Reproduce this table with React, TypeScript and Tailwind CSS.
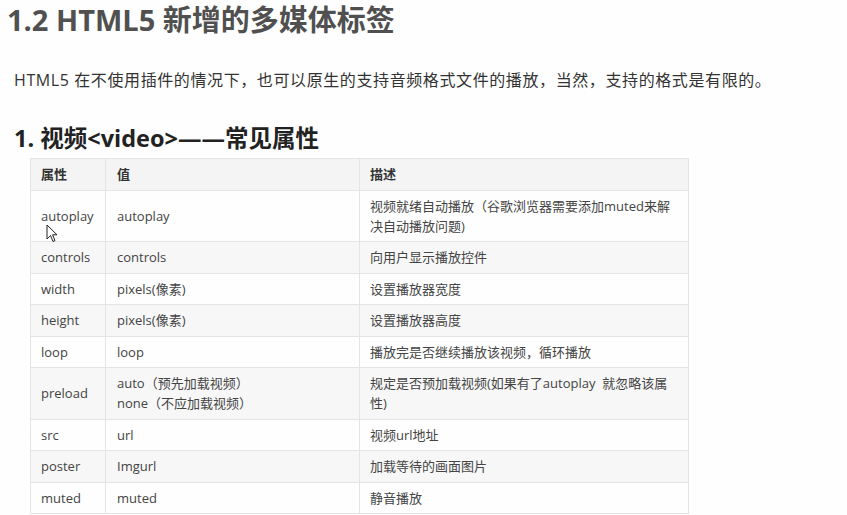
const font = { fontFamily: '"Open Sans", "Noto Sans CJK SC", sans-serif' };

const rows: { attr: string; value: string[]; desc: string[] }[] = [
  { attr: "autoplay", value: ["autoplay"], desc: ["视频就绪自动播放（谷歌浏览器需要添加muted来解", "决自动播放问题)"] },
  { attr: "controls", value: ["controls"], desc: ["向用户显示播放控件"] },
  { attr: "width", value: ["pixels(像素)"], desc: ["设置播放器宽度"] },
  { attr: "height", value: ["pixels(像素)"], desc: ["设置播放器高度"] },
  { attr: "loop", value: ["loop"], desc: ["播放完是否继续播放该视频，循环播放"] },
  { attr: "preload", value: ["auto（预先加载视频）", "none（不应加载视频）"], desc: ["规定是否预加载视频(如果有了autoplay  就忽略该属", "性)"] },
  { attr: "src", value: ["url"], desc: ["视频url地址"] },
  { attr: "poster", value: ["Imgurl"], desc: ["加载等待的画面图片"] },
  { attr: "muted", value: ["muted"], desc: ["静音播放"] },
];

function Cursor() {
  return (
    <svg className="absolute left-[46px] top-[224px]" width="12" height="19" viewBox="0 0 12 19">
      <path d="M1 1 L1 15 L4.5 11.5 L7 17.5 L9 16.6 L6.6 10.8 L11 10.8 Z" fill="#fff" stroke="#222" strokeWidth="1" strokeLinejoin="round" />
    </svg>
  );
}

export default function App() {
  return (
    <div className="relative w-[847px] h-[515px] overflow-hidden bg-[#fefefe]" style={font}>
      {/* 标题 */}
      <h1 className="pl-[7px] pt-[1px] text-[29px] leading-[38px] font-bold text-[#505050]">
        1.2 HTML5 新增的多媒体标签
      </h1>

      <p className="pl-[14px] mt-[29px] text-[16px] leading-[24px] text-[#333] tracking-[0.6px]">
        HTML5 在不使用插件的情况下，也可以原生的支持音频格式文件的播放，当然，支持的格式是有限的。
      </p>

      <h2 className="pl-[14px] mt-[31px] text-[23.5px] leading-[30px] font-bold text-[#222]">
        1. 视频&lt;video&gt;——常见属性
      </h2>

      <table className="ml-[30px] mt-[5px] border-collapse text-[13px] leading-[20px] text-[#444]">
        <thead>
          <tr className="bg-[#f4f4f4]">
            <th className="w-[75px] border border-[#e4e4e4] px-[10px] py-[5.25px] text-left font-bold text-[#333]">属性</th>
            <th className="w-[254px] border border-[#e4e4e4] px-[11px] py-[5.25px] text-left font-bold text-[#333]">值</th>
            <th className="w-[329px] border border-[#e4e4e4] px-[10px] py-[5.25px] text-left font-bold text-[#333]">描述</th>
          </tr>
        </thead>
        <tbody>
          {rows.map((r, i) => (
            <tr key={r.attr} className={i % 2 === 1 ? "bg-[#f7f7f7]" : "bg-[#fefefe]"}>
              <td className="border border-[#e4e4e4] px-[10px] py-[5.25px] align-middle">{r.attr}</td>
              <td className="border border-[#e4e4e4] px-[11px] py-[5.25px] align-middle">
                {r.value.map((v) => (
                  <div key={v}>{v}</div>
                ))}
              </td>
              <td className="border border-[#e4e4e4] px-[10px] py-[5.25px] align-middle">
                {r.desc.map((d) => (
                  <div key={d} className="whitespace-pre">{d}</div>
                ))}
              </td>
            </tr>
          ))}
        </tbody>
      </table>

      <Cursor />
    </div>
  );
}
